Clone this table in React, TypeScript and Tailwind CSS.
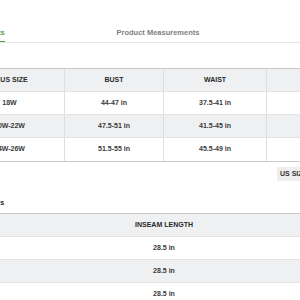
import React from "react";

const rows = [
  { size: "18W", bust: "44-47 in", waist: "37.5-41 in" },
  { size: "20W-22W", bust: "47.5-51 in", waist: "41.5-45 in" },
  { size: "24W-26W", bust: "51.5-55 in", waist: "45.5-49 in" },
];

export default function App() {
  return (
    <div
      className="w-[300px] h-[300px] overflow-hidden bg-white text-[#333]"
      style={{ fontFamily: '"Liberation Sans", Arial, sans-serif' }}
    >
      {/* Tabs */}
      <div className="pt-[28px] border-b border-[#e6e6e6]">
        <div className="flex ml-[-127px]">
          <div className="w-[190px] flex justify-center">
            <span className="text-[7.5px] leading-[10px] font-bold text-[#5a9a3c] pb-[3px] border-b-[1.5px] border-[#5a9a3c]">
              Body Measurements
            </span>
          </div>
          <div className="w-[190px] flex justify-center">
            <span className="text-[7.5px] leading-[10px] font-bold text-[#808080] pb-[3px]">
              Product Measurements
            </span>
          </div>
        </div>
      </div>

      <div className="ml-[-45px] w-[418px]">
        {/* Body measurements table */}
        <div className="mt-[25px] border-t border-b border-[#c9c9c9] text-[7px]">
          <div className="grid grid-cols-[110px_99px_103px_106px] h-[23px] bg-[#eef0f2] font-bold text-[#2a2a2a] border-b border-[#e3e3e3]">
            <div className="flex items-center justify-center border-r border-[#dedede]">PLUS SIZE</div>
            <div className="flex items-center justify-center border-r border-[#dedede]">BUST</div>
            <div className="flex items-center justify-center border-r border-[#dedede]">WAIST</div>
            <div></div>
          </div>
          {rows.map((r, i) => (
            <div
              key={r.size}
              className={
                "grid grid-cols-[110px_99px_103px_106px] h-[23px] font-bold text-[#3a3a3a] " +
                (i % 2 === 1 ? "bg-[#eef0f2] " : "bg-white ") +
                (i < 2 ? "border-b border-[#e3e3e3]" : "")
              }
            >
              <div className="flex items-center justify-center border-r border-[#dedede]">{r.size}</div>
              <div className="flex items-center justify-center border-r border-[#dedede]">{r.bust}</div>
              <div className="flex items-center justify-center border-r border-[#dedede]">{r.waist}</div>
              <div></div>
            </div>
          ))}
        </div>

        {/* Unit toggle */}
        <div className="mt-[5px] pl-[322px] flex">
          <span className="bg-[#eeeeee] text-[7px] font-bold text-[#333] leading-[14px] px-[3px] whitespace-nowrap">
            US SIZE
          </span>
        </div>

        {/* Pants heading */}
        <div className="mt-[17px] pl-[30px] text-[7px] leading-[10px] font-bold text-[#222]">Pants</div>

        {/* Inseam table */}
        <div className="mt-[5px] border-t border-[#c9c9c9] text-[7px]">
          <div className="h-[23px] flex items-center justify-center bg-[#eef0f2] font-bold text-[#2a2a2a] border-b border-[#e3e3e3]">
            INSEAM LENGTH
          </div>
          {[0, 1, 2].map((i) => (
            <div
              key={i}
              className={
                "h-[23px] flex items-center justify-center font-bold text-[#3a3a3a] border-b border-[#e3e3e3] " +
                (i % 2 === 1 ? "bg-[#eef0f2]" : "bg-white")
              }
            >
              28.5 in
            </div>
          ))}
        </div>
      </div>
    </div>
  );
}
